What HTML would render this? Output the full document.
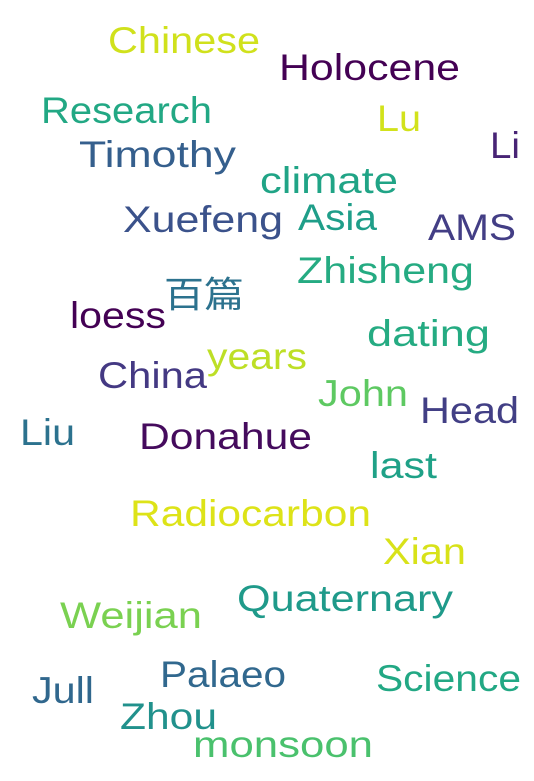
<!DOCTYPE html>
<html><head><meta charset="utf-8"><style>
html,body{margin:0;padding:0;background:#fff;width:534px;height:781px;overflow:hidden}
svg{display:block}
text{font-family:"Liberation Sans","Noto Sans CJK SC",sans-serif;font-size:37px}
</style></head><body>
<svg width="534" height="781" viewBox="0 0 534 781" xmlns="http://www.w3.org/2000/svg">
<rect width="534" height="781" fill="#fff"/>
<text x="108" y="53" textLength="152" lengthAdjust="spacingAndGlyphs" fill="#d0e11c">Chinese</text>
<text x="279" y="80" textLength="181" lengthAdjust="spacingAndGlyphs" fill="#440154">Holocene</text>
<text x="41" y="123" textLength="171" lengthAdjust="spacingAndGlyphs" fill="#22a884">Research</text>
<text x="377" y="131" textLength="44" lengthAdjust="spacingAndGlyphs" fill="#d2e21b">Lu</text>
<text x="490" y="158" textLength="30" lengthAdjust="spacingAndGlyphs" fill="#482475">Li</text>
<text x="79" y="167" textLength="157" lengthAdjust="spacingAndGlyphs" fill="#355f8d">Timothy</text>
<text x="260" y="193" textLength="138" lengthAdjust="spacingAndGlyphs" fill="#20a486">climate</text>
<text x="123" y="232" textLength="160" lengthAdjust="spacingAndGlyphs" fill="#3b528b">Xuefeng</text>
<text x="298" y="230" textLength="79" lengthAdjust="spacingAndGlyphs" fill="#1f9e89">Asia</text>
<text x="428" y="240" textLength="88" lengthAdjust="spacingAndGlyphs" fill="#433e85">AMS</text>
<text x="297" y="283" textLength="177" lengthAdjust="spacingAndGlyphs" fill="#25ab82">Zhisheng</text>
<text x="164" y="307" textLength="80" lengthAdjust="spacingAndGlyphs" fill="#2c728e" style="font-size:36px">百篇</text>
<text x="70" y="328" textLength="96" lengthAdjust="spacingAndGlyphs" fill="#440154">loess</text>
<text x="367" y="346" textLength="123" lengthAdjust="spacingAndGlyphs" fill="#25ab82">dating</text>
<text x="207" y="369" textLength="100" lengthAdjust="spacingAndGlyphs" fill="#bddf26">years</text>
<text x="98" y="388" textLength="109" lengthAdjust="spacingAndGlyphs" fill="#443983">China</text>
<text x="318" y="406" textLength="90" lengthAdjust="spacingAndGlyphs" fill="#5ec962">John</text>
<text x="420" y="423" textLength="99" lengthAdjust="spacingAndGlyphs" fill="#423f85">Head</text>
<text x="20" y="445" textLength="55" lengthAdjust="spacingAndGlyphs" fill="#2c728e">Liu</text>
<text x="139" y="449" textLength="173" lengthAdjust="spacingAndGlyphs" fill="#450b5d">Donahue</text>
<text x="370" y="478" textLength="67" lengthAdjust="spacingAndGlyphs" fill="#1fa187">last</text>
<text x="130" y="526" textLength="241" lengthAdjust="spacingAndGlyphs" fill="#dde318">Radiocarbon</text>
<text x="383" y="564" textLength="83" lengthAdjust="spacingAndGlyphs" fill="#d8e219">Xian</text>
<text x="237" y="611" textLength="216" lengthAdjust="spacingAndGlyphs" fill="#1f9a8a">Quaternary</text>
<text x="60" y="628" textLength="142" lengthAdjust="spacingAndGlyphs" fill="#7ad151">Weijian</text>
<text x="160" y="687" textLength="126" lengthAdjust="spacingAndGlyphs" fill="#31688e">Palaeo</text>
<text x="376" y="691" textLength="145" lengthAdjust="spacingAndGlyphs" fill="#22a884">Science</text>
<text x="32" y="703" textLength="62" lengthAdjust="spacingAndGlyphs" fill="#30678d">Jull</text>
<text x="120" y="729" textLength="97" lengthAdjust="spacingAndGlyphs" fill="#21918c">Zhou</text>
<text x="193" y="757" textLength="180" lengthAdjust="spacingAndGlyphs" fill="#4ac16d">monsoon</text>
</svg>
</body></html>
